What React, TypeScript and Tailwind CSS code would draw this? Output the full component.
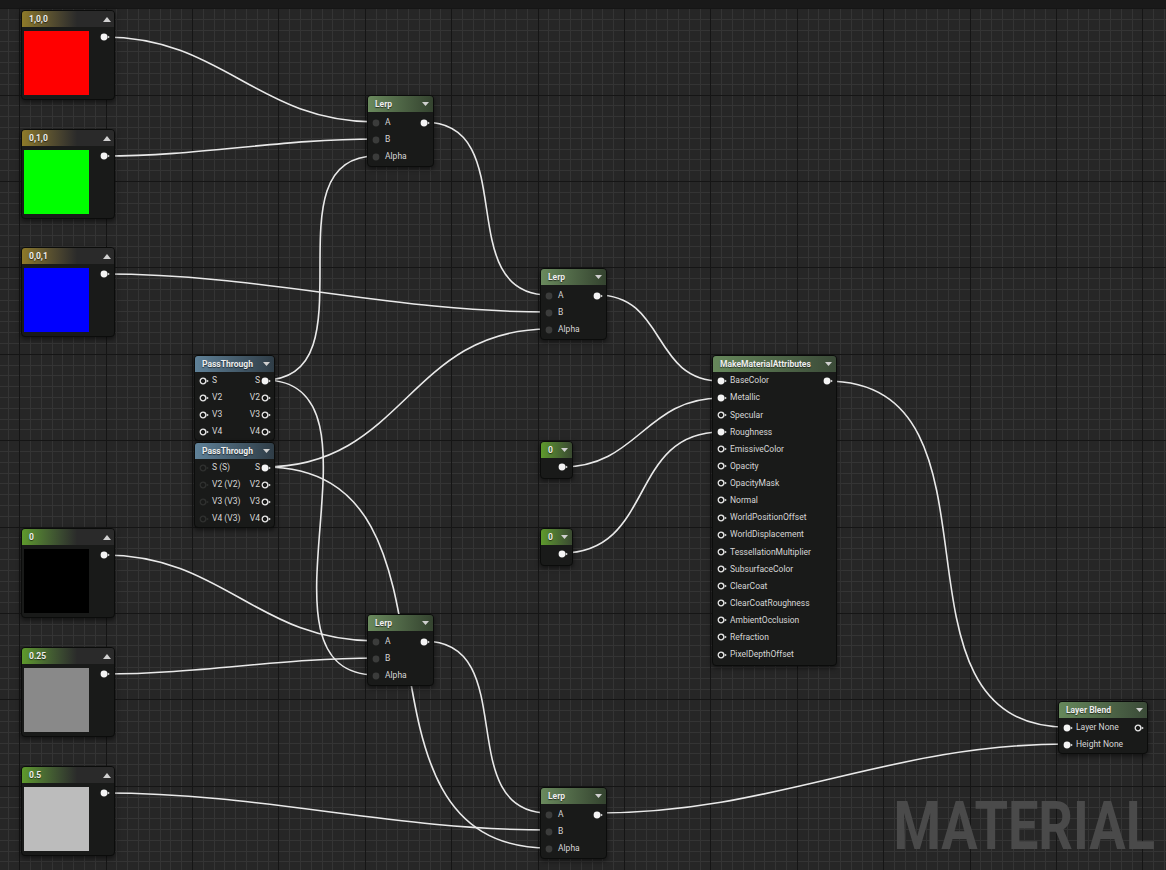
import React from 'react';

type PinKind = 'dark' | 'filled' | 'hollow' | 'dim';

// pin glyph: circle + little arrow, like the material editor
function Pin({ kind }: { kind: PinKind }) {
  const arrow = kind === 'dim' ? '#2f302f' : '#e8e8e8';
  return (
    <svg width="11" height="8" viewBox="0 0 11 8" className="block shrink-0">
      {kind === 'filled' && <circle cx="4" cy="4" r="3.4" fill="#f4f4f4" />}
      {kind === 'hollow' && <circle cx="4" cy="4" r="2.8" fill="none" stroke="#e6e6e6" strokeWidth="1.3" />}
      {kind === 'dim' && <circle cx="4" cy="4" r="2.8" fill="none" stroke="#2f302f" strokeWidth="1.3" />}
      {kind === 'dark' && <circle cx="4" cy="4" r="3.4" fill="#3b3c3b" />}
      {kind !== 'dark' && <polygon points="7.6,2.5 9.8,4 7.6,5.5" fill={arrow} />}
    </svg>
  );
}

function Tri({ up }: { up?: boolean }) {
  return up ? (
    <svg width="8" height="5" viewBox="0 0 8 5" className="block">
      <polygon points="0,5 8,5 4,0" fill="#d0d0d0" />
    </svg>
  ) : (
    <svg width="7" height="4" viewBox="0 0 7 4" className="block">
      <polygon points="0,0 7,0 3.5,4" fill="#d0d0d0" />
    </svg>
  );
}

type NodeProps = {
  x: number;
  y: number;
  w: number;
  title: string;
  head: string;
  up?: boolean;
  children?: React.ReactNode;
};

function Node({ x, y, w, title, head, up, children }: NodeProps) {
  return (
    <div
      className="absolute overflow-hidden rounded-[4px] border border-[#0b0c0b] bg-[#191a19] shadow-[0_2px_5px_rgba(0,0,0,0.55)]"
      style={{ left: x, top: y, width: w }}
    >
      <div className={`flex h-[16px] items-center justify-between pl-[7px] ${up ? 'pr-[3px]' : 'pr-[4px]'} ${head}`}>
        <span className="text-[8.5px] font-bold leading-none text-[#eeeeee] [text-shadow:0_1px_1px_rgba(0,0,0,0.6)]">
          {title}
        </span>
        <Tri up={up} />
      </div>
      {children}
    </div>
  );
}

type RowProps = {
  pin?: PinKind;
  label?: string;
  out?: string;
  outPin?: PinKind;
  tall?: boolean;
};

function Row({ pin, label, out, outPin, tall }: RowProps) {
  return (
    <div className={`flex items-center justify-between ${tall ? 'h-[17.125px]' : 'h-[17px]'}`}>
      <div className="flex items-center">
        {pin && (
          <span className="ml-[4px]">
            <Pin kind={pin} />
          </span>
        )}
        {label && <span className="ml-[2px] text-[8.5px] leading-none text-[#d6d6d6]">{label}</span>}
      </div>
      {outPin && (
        <div className="mr-[2px] flex items-center">
          {out && <span className="mr-[1px] text-[8.5px] leading-none text-[#d6d6d6]">{out}</span>}
          <Pin kind={outPin} />
        </div>
      )}
    </div>
  );
}

const colorConsts = [
  { y: 10, title: '1,0,0', swatch: 'bg-[#ff0000]', head: 'bg-gradient-to-r from-[#8e7a28] to-[#2a2a2a] to-60%' },
  { y: 129, title: '0,1,0', swatch: 'bg-[#00ff00]', head: 'bg-gradient-to-r from-[#8e7a28] to-[#2a2a2a] to-60%' },
  { y: 247, title: '0,0,1', swatch: 'bg-[#0000ff]', head: 'bg-gradient-to-r from-[#8e7a28] to-[#2a2a2a] to-60%' },
  { y: 528, title: '0', swatch: 'bg-[#000000]', head: 'bg-gradient-to-r from-[#5e9a2b] to-[#2a2a2a] to-60%' },
  { y: 647, title: '0.25', swatch: 'bg-[#898989]', head: 'bg-gradient-to-r from-[#5e9a2b] to-[#2a2a2a] to-60%' },
  { y: 766, title: '0.5', swatch: 'bg-[#bcbcbc]', head: 'bg-gradient-to-r from-[#5e9a2b] to-[#2a2a2a] to-60%' },
];

const lerps = [
  { x: 367, y: 95 },
  { x: 540, y: 268 },
  { x: 367, y: 614 },
  { x: 540, y: 787 },
];

const mmaRows = [
  ['BaseColor', 'filled'],
  ['Metallic', 'filled'],
  ['Specular', 'hollow'],
  ['Roughness', 'filled'],
  ['EmissiveColor', 'hollow'],
  ['Opacity', 'hollow'],
  ['OpacityMask', 'hollow'],
  ['Normal', 'hollow'],
  ['WorldPositionOffset', 'hollow'],
  ['WorldDisplacement', 'hollow'],
  ['TessellationMultiplier', 'hollow'],
  ['SubsurfaceColor', 'hollow'],
  ['ClearCoat', 'hollow'],
  ['ClearCoatRoughness', 'hollow'],
  ['AmbientOcclusion', 'hollow'],
  ['Refraction', 'hollow'],
  ['PixelDepthOffset', 'hollow'],
] as const;

// from -> to, pin centres
const wires = [
  [104, 37, 376, 122],
  [104, 156, 376, 139],
  [264, 380, 376, 156],
  [424, 122, 549, 295],
  [104, 274, 549, 312],
  [264, 467, 549, 329],
  [264, 380, 376, 675],
  [264, 467, 549, 848],
  [104, 555, 376, 641],
  [104, 674, 376, 658],
  [424, 641, 549, 813],
  [104, 793, 549, 830],
  [597, 295, 721, 381],
  [562, 467, 721, 398],
  [562, 553, 721, 432],
  [826, 381, 1067, 727],
  [597, 813, 1067, 744],
];

const wirePath = ([x1, y1, x2, y2]: number[]) => {
  const c = (Math.abs(x2 - x1) + Math.abs(y2 - y1)) / 3;
  return `M${x1} ${y1} C${x1 + c} ${y1} ${x2 - c} ${y2} ${x2} ${y2}`;
};

function Grid() {
  const vs = Array.from({ length: 109 }, (_, i) => i - 2);
  const hs = Array.from({ length: 81 }, (_, i) => i);
  const vx = (k: number) => Math.round(19.2 + k * 10.8) + 0.5;
  const hy = (k: number) => Math.round(8.2 + k * 10.8) + 0.5;
  return (
    <svg className="absolute inset-0" width="1166" height="870" shapeRendering="crispEdges">
      {vs.filter((k) => k % 8 !== 0).map((k) => (
        <line key={'v' + k} x1={vx(k)} x2={vx(k)} y1="0" y2="870" stroke="#343434" />
      ))}
      {hs.filter((k) => k % 8 !== 0).map((k) => (
        <line key={'h' + k} y1={hy(k)} y2={hy(k)} x1="0" x2="1166" stroke="#343434" />
      ))}
      {vs.filter((k) => k % 8 === 0).map((k) => (
        <line key={'V' + k} x1={vx(k)} x2={vx(k)} y1="0" y2="870" stroke="#151515" />
      ))}
      {hs.filter((k) => k % 8 === 0).map((k) => (
        <line key={'H' + k} y1={hy(k)} y2={hy(k)} x1="0" x2="1166" stroke="#151515" />
      ))}
      <rect x="0" y="0" width="1166" height="8" fill="#191919" />
    </svg>
  );
}

export default function App() {
  return (
    <div className="relative h-[870px] w-[1166px] overflow-hidden bg-[#262626] font-[family-name:Roboto,'Liberation_Sans',sans-serif]">
      <Grid />

      <div className="absolute right-[11px] top-[794px] origin-right scale-x-[0.82] text-[66px] font-bold leading-none text-[#4a4a4a]">
        MATERIAL
      </div>

      <svg className="absolute inset-0" width="1166" height="870">
        {wires.map((w, i) => (
          <path key={i} d={wirePath(w)} fill="none" stroke="#e9e9e9" strokeWidth="1.6" />
        ))}
      </svg>

      {colorConsts.map((c) => (
        <Node key={c.title + c.y} x={21} y={c.y} w={94} title={c.title} head={c.head} up>
          <div className="flex items-start pb-[4px] pl-[2px] pt-[4px]">
            <div className={`h-[64px] w-[65px] ${c.swatch}`} />
            <span className="ml-[11px] mt-[2px]">
              <Pin kind="filled" />
            </span>
          </div>
        </Node>
      ))}

      {lerps.map((l, i) => (
        <Node key={i} x={l.x} y={l.y} w={67} title="Lerp" head="bg-gradient-to-r from-[#6a8a5d] to-[#34432f]">
          <div className="pb-[1px] pt-[2px]">
            <Row pin="dark" label="A" outPin="filled" />
            <Row pin="dark" label="B" />
            <Row pin="dark" label="Alpha" />
          </div>
        </Node>
      ))}

      <Node x={194} y={355} w={81} title="PassThrough" head="bg-gradient-to-r from-[#5f8198] to-[#2f3d47]">
        <Row pin="hollow" label="S" out="S" outPin="filled" />
        <Row pin="hollow" label="V2" out="V2" outPin="hollow" />
        <Row pin="hollow" label="V3" out="V3" outPin="hollow" />
        <Row pin="hollow" label="V4" out="V4" outPin="hollow" />
      </Node>

      <Node x={194} y={442} w={81} title="PassThrough" head="bg-gradient-to-r from-[#5f8198] to-[#2f3d47]">
        <Row pin="dim" label="S (S)" out="S" outPin="filled" />
        <Row pin="dim" label="V2 (V2)" out="V2" outPin="hollow" />
        <Row pin="dim" label="V3 (V3)" out="V3" outPin="hollow" />
        <Row pin="dim" label="V4 (V3)" out="V4" outPin="hollow" />
      </Node>

      {[441, 528].map((y) => (
        <Node key={y} x={540} y={y} w={33} title="0" head="bg-gradient-to-r from-[#5e9a2b] to-[#3a4a30]">
          <div className="h-[20px] pl-[17px] pt-[5px]">
            <Pin kind="filled" />
          </div>
        </Node>
      ))}

      <Node x={712} y={355} w={125} title="MakeMaterialAttributes" head="bg-gradient-to-r from-[#66885b] to-[#3b4b38]">
        <div className="pb-[2px]">
          {mmaRows.map(([label, kind], i) => (
            <Row key={label} tall pin={kind} label={label} outPin={i === 0 ? 'filled' : undefined} />
          ))}
        </div>
      </Node>

      <Node x={1058} y={701} w={90} title="Layer Blend" head="bg-gradient-to-r from-[#66885b] to-[#3b4b38]">
        <div className="pt-[1px]">
          <Row pin="filled" label="Layer None" outPin="hollow" />
          <Row pin="filled" label="Height None" />
        </div>
      </Node>
    </div>
  );
}
